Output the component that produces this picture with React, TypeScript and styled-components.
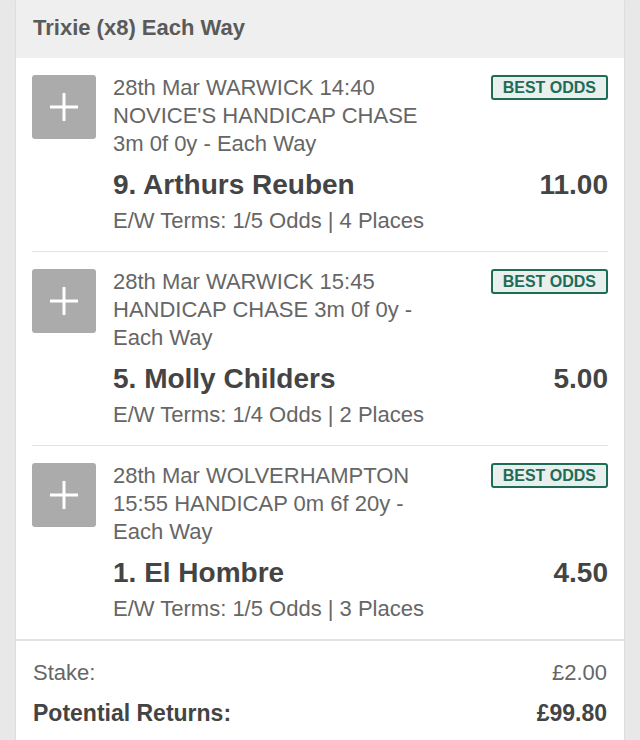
import React from "react";
import styled, { createGlobalStyle } from "styled-components";

const Global = createGlobalStyle`
  html, body { margin: 0; padding: 0; background: #e8e8e8; }
  body { font-family: "Liberation Sans", Arial, sans-serif; -webkit-font-smoothing: antialiased; }
`;

const Card = styled.div`
  margin: 0 16px;
  background: #ffffff;
  box-shadow: 0 0 2px rgba(0, 0, 0, 0.12);
  min-height: 740px;
`;

const Header = styled.div`
  height: 58px;
  background: #efefef;
  display: flex;
  align-items: center;
  padding: 0 17px 2px;
  font-size: 22px;
  font-weight: 700;
  color: #5a5a5a;
  box-sizing: border-box;
`;

const List = styled.div`
  padding: 0 16px;
`;

const Item = styled.div`
  display: flex;
  gap: 17px;
  padding: 16px 0 16px;
  border-bottom: 1px solid #e3e3e3;

  &:last-child {
    border-bottom: none;
  }
`;

const PlusBox = styled.div`
  flex: 0 0 64px;
  width: 64px;
  height: 64px;
  margin-top: 1px;
  border-radius: 3px;
  background: #ababab;
  display: flex;
  align-items: center;
  justify-content: center;
`;

const Body = styled.div`
  flex: 1;
  min-width: 0;
`;

const TopRow = styled.div`
  display: flex;
  justify-content: space-between;
  align-items: flex-start;
`;

const Desc = styled.div`
  max-width: 320px;
  font-size: 22px;
  line-height: 28px;
  color: #666666;
`;

const Badge = styled.div`
  margin-top: 1px;
  height: 25px;
  box-sizing: border-box;
  padding: 0 10px;
  border: 2px solid #1d6c57;
  border-radius: 3px;
  background: #e8efed;
  color: #1d6c57;
  font-size: 16px;
  font-weight: 700;
  display: flex;
  align-items: center;
  white-space: nowrap;
`;

const NameRow = styled.div`
  display: flex;
  justify-content: space-between;
  margin-top: 11px;
  font-size: 28px;
  line-height: 32px;
  font-weight: 700;
  color: #444444;
`;

const Terms = styled.div`
  margin-top: 6px;
  font-size: 22px;
  line-height: 28px;
  color: #666666;
`;

const Footer = styled.div`
  border-top: 2px solid #dfe3e6;
  padding: 18px 17px;
  display: flex;
  flex-direction: column;
  gap: 12px;
`;

const FooterRow = styled.div<{ $bold?: boolean }>`
  display: flex;
  justify-content: space-between;
  font-size: ${(p) => (p.$bold ? "23px" : "22px")};
  line-height: 28px;
  color: ${(p) => (p.$bold ? "#444444" : "#666666")};
  font-weight: ${(p) => (p.$bold ? 700 : 400)};
`;

const PlusIcon = () => (
  <svg width="30" height="30" viewBox="0 0 30 30">
    <path d="M15 1 V29 M1 15 H29" stroke="#ffffff" strokeWidth="3" fill="none" />
  </svg>
);

const bets = [
  {
    desc: "28th Mar WARWICK 14:40 NOVICE'S HANDICAP CHASE 3m 0f 0y - Each Way",
    name: "9. Arthurs Reuben",
    odds: "11.00",
    terms: "E/W Terms: 1/5 Odds | 4 Places",
  },
  {
    desc: "28th Mar WARWICK 15:45 HANDICAP CHASE 3m 0f 0y - Each Way",
    name: "5. Molly Childers",
    odds: "5.00",
    terms: "E/W Terms: 1/4 Odds | 2 Places",
  },
  {
    desc: "28th Mar WOLVERHAMPTON 15:55 HANDICAP 0m 6f 20y - Each Way",
    name: "1. El Hombre",
    odds: "4.50",
    terms: "E/W Terms: 1/5 Odds | 3 Places",
  },
];

export default function App() {
  return (
    <>
      <Global />
      <Card>
        <Header>Trixie (x8) Each Way</Header>
        <List>
          {bets.map((b) => (
            <Item key={b.name}>
              <PlusBox>
                <PlusIcon />
              </PlusBox>
              <Body>
                <TopRow>
                  <Desc>{b.desc}</Desc>
                  <Badge>BEST ODDS</Badge>
                </TopRow>
                <NameRow>
                  <span>{b.name}</span>
                  <span>{b.odds}</span>
                </NameRow>
                <Terms>{b.terms}</Terms>
              </Body>
            </Item>
          ))}
        </List>
        <Footer>
          <FooterRow>
            <span>Stake:</span>
            <span>£2.00</span>
          </FooterRow>
          <FooterRow $bold>
            <span>Potential Returns:</span>
            <span>£99.80</span>
          </FooterRow>
        </Footer>
      </Card>
    </>
  );
}
